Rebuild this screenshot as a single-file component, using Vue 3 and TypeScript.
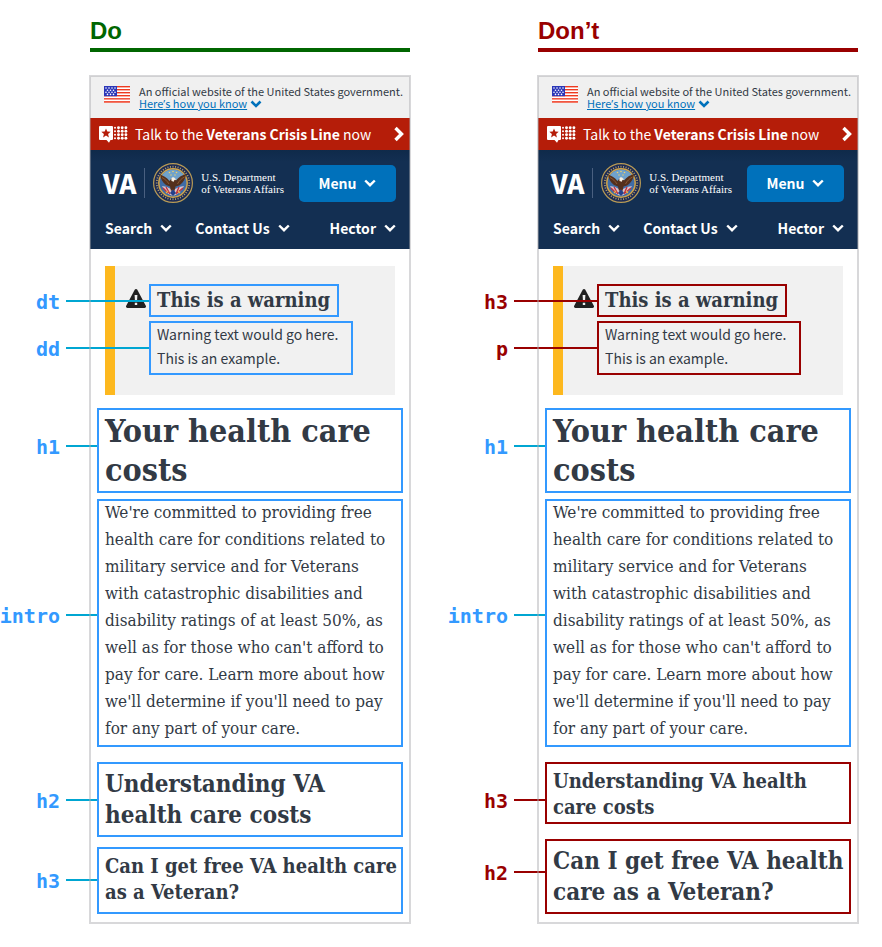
<script setup lang="ts">
type Tone = 'blue' | 'red'

interface Note {
  tag: string
  label: string
  tone: Tone
  /** Distance from the top of the box to its leader line */
  at: number
  size: 'h1' | 'h2' | 'h3' | 'intro'
  text: string
}

interface Example {
  id: string
  title: string
  wrap: string
  warning: { title: string; body: string; tone: Tone }
  notes: Note[]
}

const shared: Note[] = [
  { tag: 'h1', label: 'h1', tone: 'blue', at: 36, size: 'h1', text: 'Your health care\ncosts' },
  {
    tag: 'p',
    label: 'intro',
    tone: 'blue',
    at: 114,
    size: 'intro',
    text: [
      "We're committed to providing free",
      'health care for conditions related to',
      'military service and for Veterans',
      'with catastrophic disabilities and',
      'disability ratings of at least 50%, as',
      "well as for those who can't afford to",
      'pay for care. Learn more about how',
      "we'll determine if you'll need to pay",
      'for any part of your care.',
    ].join('\n'),
  },
]

const examples: Example[] = [
  {
    id: 'do',
    title: 'Do',
    wrap: 'dl',
    warning: { title: 'dt', body: 'dd', tone: 'blue' },
    notes: [
      ...shared,
      { tag: 'h2', label: 'h2', tone: 'blue', at: 36, size: 'h2', text: 'Understanding VA\nhealth care costs' },
      { tag: 'h3', label: 'h3', tone: 'blue', at: 31, size: 'h3', text: 'Can I get free VA health care\nas a Veteran?' },
    ],
  },
  {
    id: 'dont',
    title: 'Don’t',
    wrap: 'div',
    warning: { title: 'h3', body: 'p', tone: 'red' },
    notes: [
      ...shared,
      { tag: 'h3', label: 'h3', tone: 'red', at: 36, size: 'h3', text: 'Understanding VA health\ncare costs' },
      { tag: 'h2', label: 'h2', tone: 'red', at: 31, size: 'h2', text: 'Can I get free VA health\ncare as a Veteran?' },
    ],
  },
]

const menus = ['Search', 'Contact Us', 'Hector']
const rays = Array.from({ length: 40 }, (_, i) => i * 9)
</script>

<template>
  <main class="page">
    <section v-for="ex in examples" :key="ex.id" class="example" :class="ex.id">
      <h2 class="verdict">{{ ex.title }}</h2>

      <article class="phone">
        <div class="gov">
          <svg class="flag" viewBox="0 0 26 17" aria-hidden="true">
            <rect width="26" height="17" fill="#fff" />
            <g fill="#ee3a20">
              <rect y="0" width="26" height="1.4" />
              <rect y="3" width="26" height="1.4" />
              <rect y="6" width="26" height="1.4" />
              <rect y="9" width="26" height="1.4" />
              <rect y="12" width="26" height="1.6" opacity=".85" />
              <rect y="15" width="26" height="1.8" opacity=".85" />
            </g>
            <rect width="13" height="10.2" fill="#2a36b8" />
            <g fill="#fff">
              <circle v-for="n in 4" :key="'a' + n" :cx="n * 3 - 1" cy="2" r=".8" />
              <circle v-for="n in 3" :key="'b' + n" :cx="n * 3 + 0.5" cy="4.2" r=".8" />
              <circle v-for="n in 4" :key="'c' + n" :cx="n * 3 - 1" cy="6.2" r=".8" />
              <circle v-for="n in 3" :key="'d' + n" :cx="n * 3 + 0.5" cy="8.4" r=".8" />
            </g>
          </svg>
          <div class="gov-text">
            <span>An official website of the United States government.</span>
            <a class="gov-link" href="#how"><span class="underlined">Here<span class="apostrophe">’</span>s how you know</span>
              <svg class="chev-small" viewBox="0 0 12 8" aria-hidden="true"><path d="M1.5 1.5 6 6l4.500-4.500" fill="none" stroke="#0071bb" stroke-width="2.600" /></svg>
            </a>
          </div>
        </div>

        <a class="crisis" href="#crisis">
          <svg class="crisis-icon" viewBox="0 0 29 17" aria-hidden="true">
            <path d="M1 0h12a1 1 0 0 1 1 1v12a1 1 0 0 1-1 1h-1.500L10 16.800 7.500 14H1a1 1 0 0 1-1-1V1a1 1 0 0 1 1-1z" fill="#fff" />
            <path d="M7 2.400l1.300 3.200 3.400.2-2.600 2.200.8 3.400L7 9.600l-2.900 1.800.8-3.400-2.600-2.200 3.400-.2z" fill="#b51d09" />
            <g fill="#fff">
              <template v-for="r in 4" :key="r">
                <circle cx="16" :cy="r * 3.5 - 1.700" r="1" />
                <circle v-for="c in 3" :key="c" :cx="15.800 + c * 3.700" :cy="r * 3.5 - 1.700" r="1.450" />
              </template>
            </g>
          </svg>
          <span class="crisis-text">Talk to the <strong>Veterans Crisis Line</strong> now</span>
          <svg class="crisis-arrow" viewBox="0 0 10 16" aria-hidden="true"><path d="M1.500 2 7.500 8l-6 6" fill="none" stroke="#fff" stroke-width="3.400" /></svg>
        </a>

        <header class="header">
          <div class="brand-row">
            <span class="va">VA</span>
            <span class="divider"></span>
            <svg class="seal" viewBox="0 0 40 40" aria-hidden="true">
              <circle cx="20" cy="20" r="19.400" fill="#1b2a55" stroke="#b79a55" stroke-width="1.200" />
              <g stroke="#b5a06c" stroke-width="1">
                <line v-for="a in rays" :key="a" x1="20" y1="2.800" x2="20" y2="4.600" :transform="`rotate(${a} 20 20)`" />
              </g>
              <circle cx="20" cy="20" r="14.200" fill="#3f6ca6" stroke="#d3a548" stroke-width="1.500" />
              <path d="M8 14a13.500 13.500 0 0 1 24 0l-6 5H14z" fill="#6fa2cc" />
              <g fill="#f1d268">
                <circle cx="16.500" cy="9.500" r=".8" /><circle cx="20" cy="8.500" r=".8" /><circle cx="23.500" cy="9.500" r=".8" />
                <circle cx="18" cy="12" r=".7" /><circle cx="22" cy="12" r=".7" />
              </g>
              <path d="M9 23c4 7 8 9.500 11 9.500S27 30 31 23l-5 1-6 3-6-3z" fill="#d9c3cc" />
              <path d="M10 25l5 5M13 24l4 7M26 24l-3 7M30 25l-6 5" stroke="#c0303c" stroke-width="1.400" />
              <path d="M17 30l3-4 3 4-3 3z" fill="#24408a" />
              <path d="M7.200 11.500c2.500 1 6.500 2.800 9.300 6.500l2-2.500 2.500-.5 2 2.500c2.500-3.500 6.500-5.500 10-6.500-.4 4.500-2.800 9-7 11.500l-3.500 1-1 4.500-1.500-1.500-2 1.500-1-4.500-4-1.500c-3.600-2.500-5.600-6.500-5.800-10.500z" fill="#54301d" />
              <path d="M9 14.500c3 1.500 5 3.500 7 6.500M31.500 14c-3 1.500-5.500 4-7 7" fill="none" stroke="#8c5a34" stroke-width="1" />
              <path d="M18.300 15.600c.7-1.500 2.700-1.700 3.600-.4l1.300 1.400-1.800.5-.6 1.700-2.300-.8z" fill="#f5efe2" />
              <path d="M15 28l-2 2M25 28l2 2" stroke="#e4b646" stroke-width="1.300" />
            </svg>
            <span class="dept">U.S. Department<br />of Veterans Affairs</span>
            <button class="menu" type="button">
              Menu
              <svg class="chev" viewBox="0 0 12 8" aria-hidden="true"><path d="M1.200 1.500 6 6.200l4.800-4.700" fill="none" stroke="#fff" stroke-width="2.400" /></svg>
            </button>
          </div>
          <nav class="nav">
            <button v-for="m in menus" :key="m" class="nav-item" type="button">
              {{ m }}
              <svg class="chev" viewBox="0 0 12 8" aria-hidden="true"><path d="M1.200 1.500 6 6.200l4.800-4.700" fill="none" stroke="#fff" stroke-width="2.400" /></svg>
            </button>
          </nav>
        </header>

        <div class="content">
          <div class="alert">
            <svg class="alert-icon" viewBox="0 0 20 19" aria-hidden="true">
              <path d="M8.700.8a1.500 1.500 0 0 1 2.600 0l8.500 16a1.500 1.500 0 0 1-1.300 2.200h-17a1.500 1.500 0 0 1-1.300-2.200z" fill="#212121" />
              <path d="M8.600 6h2.800l-.4 6.500H9zM8.800 13.800h2.400V16H8.800z" fill="#f1f1f1" />
            </svg>
            <component :is="ex.wrap" class="alert-body">
              <component :is="ex.warning.title" class="box warning-title" :class="ex.warning.tone">
                This is a warning
                <span class="note far" :style="{ top: '0px' }"><code class="tag">{{ ex.warning.title }}</code><i class="lead"></i></span>
              </component>
              <component :is="ex.warning.body" class="box warning-text" :class="ex.warning.tone">
                <span class="warning-copy">Warning text would go here.<br />This is an example.</span>
                <span class="note far" :style="{ top: '10px' }"><code class="tag">{{ ex.warning.body }}</code><i class="lead"></i></span>
              </component>
            </component>
          </div>

          <div class="stack">
            <component :is="n.tag" v-for="n in ex.notes" :key="n.text" class="box block" :class="[n.size, n.tone]">
              <span class="copy">{{ n.text }}</span>
              <span class="note" :style="{ top: n.at - 15 + 'px' }"><code class="tag">{{ n.label }}</code><i class="lead"></i></span>
            </component>
          </div>
        </div>
      </article>
    </section>
  </main>
</template>

<style>
body {
  background: #fff;
}
</style>

<style scoped>
.page {
  display: grid;
  grid-template-columns: repeat(2, minmax(0, 1fr));
  gap: 38px;
  padding: 14px 24px 24px 0;
  font-family: "Noto Sans CJK SC", "Open Sans", sans-serif;
  color: #323a45;
}
.example {
  padding-left: 90px;
}
.verdict {
  margin: 0 0 24px;
  border-bottom: 4px solid;
  font: 700 24px/34px "Liberation Sans", Arial, sans-serif;
}
.do .verdict {
  color: #006600;
}
.dont .verdict {
  color: #990000;
}

.phone {
  position: relative;
}
.phone::after {
  content: "";
  position: absolute;
  inset: -1px;
  border: 2px solid rgba(170, 170, 175, 0.46);
  pointer-events: none;
}

.gov {
  display: flex;
  gap: 9px;
  height: 32px;
  padding: 10px 4px 0 14px;
  background: #f0f0f0;
}
.flag {
  width: 26px;
  height: 17px;
}
.gov-text {
  margin-top: -1px;
  font-size: 11px;
  line-height: 12px;
  white-space: nowrap;
}
.gov-link {
  display: flex;
  align-items: center;
  gap: 3px;
  color: #0071bb;
  text-decoration: none;
}
.underlined {
  text-decoration: underline;
}
.apostrophe {
  font-family: "Open Sans", sans-serif;
}
.chev-small {
  width: 12px;
  height: 8px;
}

.crisis {
  display: flex;
  align-items: center;
  height: 32px;
  padding: 0 6px 0 9px;
  background: #b51d09;
  color: #fff;
  font-size: 14px;
  line-height: 20px;
  text-decoration: none;
  white-space: nowrap;
}
.crisis-icon {
  width: 29px;
  height: 17px;
  margin-right: 7px;
}
.crisis-text {
  flex: 1;
}
.crisis-arrow {
  width: 10px;
  height: 16px;
}

.header {
  padding: 12px 14px 10px 13px;
  background: linear-gradient(#0f2a4a, #132f52 12px);
  color: #fff;
}
.brand-row {
  display: flex;
  align-items: center;
  height: 42px;
}
.va {
  font-size: 26px;
  font-weight: 900;
  line-height: 30px;
}
.divider {
  width: 1px;
  height: 30px;
  margin: 0 8px;
  background: #4a6080;
}
.seal {
  width: 40px;
  height: 40px;
}
.dept {
  margin-left: 8px;
  font: 11px/12px "Liberation Serif", serif;
  white-space: nowrap;
}
.menu,
.nav-item {
  display: flex;
  align-items: center;
  gap: 8px;
  padding: 0;
  border: 0;
  background: none;
  color: #fff;
  font: 700 14px/20px "Noto Sans CJK SC", sans-serif;
  white-space: nowrap;
}
.menu {
  justify-content: center;
  width: 97px;
  height: 37px;
  margin-left: auto;
  border-radius: 5px;
  background: #0071bb;
}
.chev {
  width: 12px;
  height: 8px;
}
.nav {
  display: flex;
  gap: 23px;
  margin-top: 14px;
  padding: 0 0 1px 2px;
}
.nav-item:last-child {
  margin-left: auto;
}

.content {
  padding: 17px 7px 9px;
}
.alert {
  display: flex;
  margin: 0 8px 13px;
  padding: 18px 0 20px;
  border-left: 10px solid #fdb81e;
  background: #f1f1f1;
}
.alert-icon {
  width: 20px;
  height: 19px;
  margin: 5px 3px 0 11px;
}
.alert-body {
  display: flex;
  flex-direction: column;
  align-items: flex-start;
  gap: 4px;
  margin: 0;
}

.box {
  position: relative;
  margin: 0;
  border: 2px solid;
}
.blue {
  --mark: #3399ff;
  --lead: #00a6d2;
  border-color: var(--mark);
}
.red {
  --mark: #990000;
  --lead: #990000;
  border-color: var(--mark);
}
.warning-title {
  padding: 0 7px 1px 6px;
  font: 700 20px/28px "DejaVu Serif Condensed", "DejaVu Serif", serif;
}
.warning-text {
  padding: 0 13px 3px 6px;
  font-size: 14px;
  line-height: 24px;
}
.warning-copy {
  display: block;
  margin-top: -1px;
}

.stack {
  display: flex;
  flex-direction: column;
}
.block {
  font-family: "DejaVu Serif Condensed", "DejaVu Serif", serif;
  font-weight: 700;
}
.copy {
  display: block;
  padding-left: 6px;
  white-space: pre;
}
.h1 {
  margin-bottom: 6px;
  padding: 2px 0 1px;
  font-size: 32px;
  line-height: 39px;
}
.intro {
  margin-bottom: 15px;
  padding-bottom: 3px;
  font-size: 17px;
  font-weight: 400;
  line-height: 27px;
}
.intro .copy {
  margin-top: -2px;
}
.h2 {
  padding: 4px 0 5px;
  font-size: 24px;
  line-height: 31px;
}
.h3 {
  padding: 4px 0 7px;
  font-size: 20px;
  line-height: 26px;
}
.h2 + .h3 {
  margin-top: 10px;
}
.h3 + .h2 {
  margin-top: 15px;
}
.dont .h3 {
  padding-bottom: 2px;
}

.note {
  position: absolute;
  right: 100%;
  display: flex;
  align-items: center;
  gap: 6px;
  height: 30px;
  margin-right: 2px;
}
.tag {
  padding-top: 1px;
  color: var(--mark);
  font: 700 20px/24px "DejaVu Sans Mono", monospace;
}
.lead {
  width: 31px;
  height: 2px;
  background: var(--lead);
}
.far .lead {
  width: 83px;
}
</style>
